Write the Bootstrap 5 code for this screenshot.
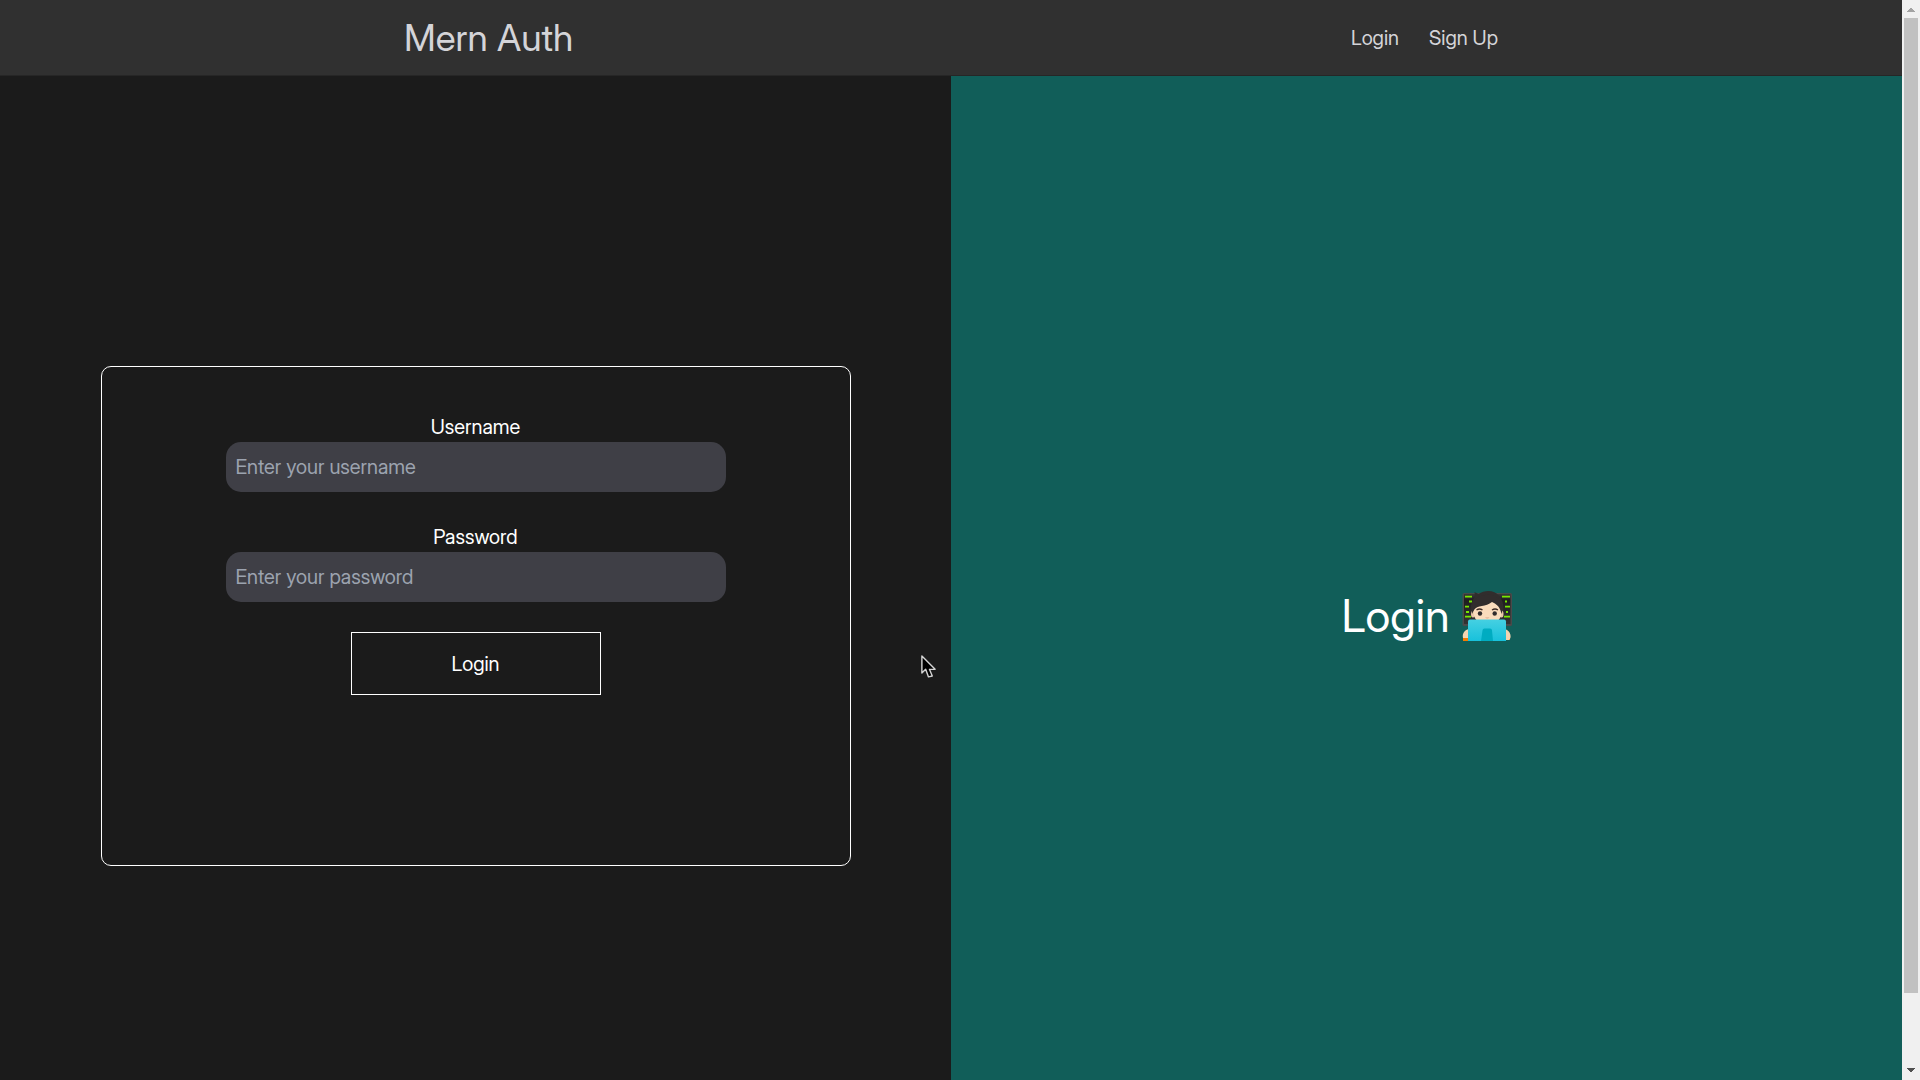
<!DOCTYPE html>
<html lang="en">
<head>
<meta charset="utf-8">
<meta name="viewport" content="width=device-width, initial-scale=1">
<title>Mern Auth</title>
<link href="https://cdn.jsdelivr.net/npm/bootstrap@5.3.0/dist/css/bootstrap.min.css" rel="stylesheet">
<style>
  body { font-family: "Inter Display", Inter, "Liberation Sans", sans-serif; font-variation-settings: "opsz" 32; font-size: 20px; line-height: 30px; background: #1b1b1b; color: #fff; }
  .site-header { background: #303030; border-bottom: 1px solid #262626; height: 76px; }
  .header-inner { max-width: 1094px; }
  .brand-title { font-size: 37px; line-height: 45px; color: #d4d4d8; }
  .top-link { color: #d4d4d8; }
  .top-links { gap: 30px; }
  .panel { height: 100vh; }
  .panel-teal { background: #115e59; }
  .login-box { max-width: 750px; min-height: 500px; padding: 45px 20px; border: 1px solid #fff; border-radius: 10px; }
  .login-form { max-width: 500px; gap: 30px; }
  .text-field, .text-field:focus { height: 50px; padding: 10px; font-size: 20px; line-height: 30px; background: #3f3f46; color: #fff; border: 0; border-radius: 15px; }
  .text-field::placeholder { color: #9ca3af; opacity: 1; }
  .login-btn { width: 250px; height: 63px; font-size: 20px; color: #fff; border: 1px solid #fff; }
  .login-btn:hover { color: #1b1b1b; background: #fff; }
  .hero-title { font-size: 45px; line-height: 50px; gap: 12px; }
  .scroll-rail { width: 18px; background: #f0f0f0; padding: 0 2px; }
  .scroll-thumb { background: #c1c1c1; height: 975px; }
  .pointer { left: 920px; top: 654px; }
</style>
<script src="https://cdn.jsdelivr.net/npm/bootstrap@5.3.0/dist/js/bootstrap.bundle.min.js"></script>
</head>
<body>
<div class="d-flex vh-100 overflow-hidden">
  <div class="flex-grow-1">
    <header class="site-header d-flex align-items-center">
      <nav class="header-inner container-fluid px-0 d-flex justify-content-between align-items-center">
        <a class="brand-title text-decoration-none" href="#">Mern Auth</a>
        <div class="top-links d-flex">
          <a class="top-link text-decoration-none" href="#">Login</a>
          <a class="top-link text-decoration-none" href="#">Sign Up</a>
        </div>
      </nav>
    </header>
    <main class="row g-0">
      <section class="panel col-6 d-flex align-items-center justify-content-center">
        <div class="login-box w-100">
          <form class="login-form mx-auto d-flex flex-column">
            <div class="text-center">
              <label class="d-block" for="username">Username</label>
              <input class="text-field form-control" id="username" type="text" placeholder="Enter your username">
            </div>
            <div class="text-center">
              <label class="d-block" for="password">Password</label>
              <input class="text-field form-control" id="password" type="password" placeholder="Enter your password">
            </div>
            <button class="login-btn btn rounded-0 align-self-center" type="button">Login</button>
          </form>
        </div>
      </section>
      <section class="panel panel-teal col-6 d-flex align-items-center justify-content-center">
        <h1 class="hero-title fw-normal m-0 d-flex align-items-center">Login
          <svg width="50" height="50" viewBox="0 0 50 50" role="img" aria-label="Technologist">
            <defs>
              <linearGradient id="lap" x1="0" y1="0" x2="0" y2="1"><stop offset="0" stop-color="#45d0e2"/><stop offset="1" stop-color="#18c1db"/></linearGradient>
              <linearGradient id="scr" x1="0" y1="0" x2="0" y2="1"><stop offset="0" stop-color="#3a3a3a"/><stop offset=".2" stop-color="#1f1f1f"/><stop offset="1" stop-color="#333"/></linearGradient>
            </defs>
            <rect x="0.500" y="2" width="49.500" height="33" rx="1.500" fill="#4a4a4a"/>
            <rect x="2" y="3" width="46.500" height="30" fill="url(#scr)"/>
            <path d="M3 5.700h7M7 10.500h3M3 15.700h4M4 21h3M3 25.700h6M40 5.700h8M43 10.500h2M43 15.700h5M44 21h2M42 25.700h6" stroke="#76e800" stroke-width="1.800"/>
            <path d="M9.500 26C7.500 19 9 10 13 6L12.500 1l4 2C23-1.500 33-1 37 5c5 5 5.500 14 3 21z" fill="#312d2d"/>
            <ellipse cx="11" cy="23" rx="2" ry="3.500" fill="#e8c8a8"/><ellipse cx="39.500" cy="23" rx="2" ry="3.500" fill="#e8c8a8"/>
            <path d="M11.500 20C12 13 21 15 29 9c6 2 10 5 10.500 11 .5 7-4 13-14 13S11 27 11.500 20z" fill="#fadcbc"/>
            <path d="M10 23C8 13 13 5 23 4c11-2 19 6 17 19-2-3-1-8-10-12-6 5-15 3-18 8z" fill="#312d2d"/>
            <path d="M14.500 19q3-2 6 0M30 19q3-2 6 0" fill="none" stroke="#3c2b24" stroke-width="1.300"/>
            <circle cx="18" cy="22.500" r="2.200" fill="#312d2d"/><circle cx="32.700" cy="22.500" r="2.200" fill="#312d2d"/>
            <path d="M23 26.500h4.500q-2.200 2-4.500 0z" fill="#dba689"/>
            <path d="M1 45h7v5H1zM43 45h5v4h-5z" fill="#f57c00"/>
            <path d="M1 47c-1-4 1-8 6-9v9zM47 49c3-2 2-9-4-11v11z" fill="#f5d4b0"/>
            <path d="M6 30.500q0-2 2-2h34q2 0 2 2V50H6z" fill="url(#lap)"/>
            <path d="M19 50l1.500-10.500q0-2 2-2H28q2 0 2 2L31 50z" fill="#00acc1"/>
          </svg>
        </h1>
      </section>
    </main>
  </div>
  <div class="scroll-rail flex-shrink-0 d-flex flex-column" aria-hidden="true">
    <svg width="14" height="18" viewBox="0 0 14 18" class="flex-shrink-0"><path d="M3 12V11h1v-1h1V9h1V8h2v1h1v1h1v1h1v1z" fill="#a3a3a3"/></svg>
    <div class="scroll-thumb"></div>
    <svg width="14" height="18" viewBox="0 0 14 18" class="flex-shrink-0 mt-auto"><path d="M3 6v1h1v1h1v1h1v1h2V9h1V8h1V7h1V6z" fill="#505050"/></svg>
  </div>
</div>
<svg class="pointer position-absolute pe-none" width="17" height="25" viewBox="0 0 18 26" aria-hidden="true"><path d="M2 2v18l4-4 3 8 4-1-3-7h6z" fill="#000" stroke="#d4d4d4" stroke-width="1.500" stroke-linejoin="round"/></svg>
</body>
</html>
